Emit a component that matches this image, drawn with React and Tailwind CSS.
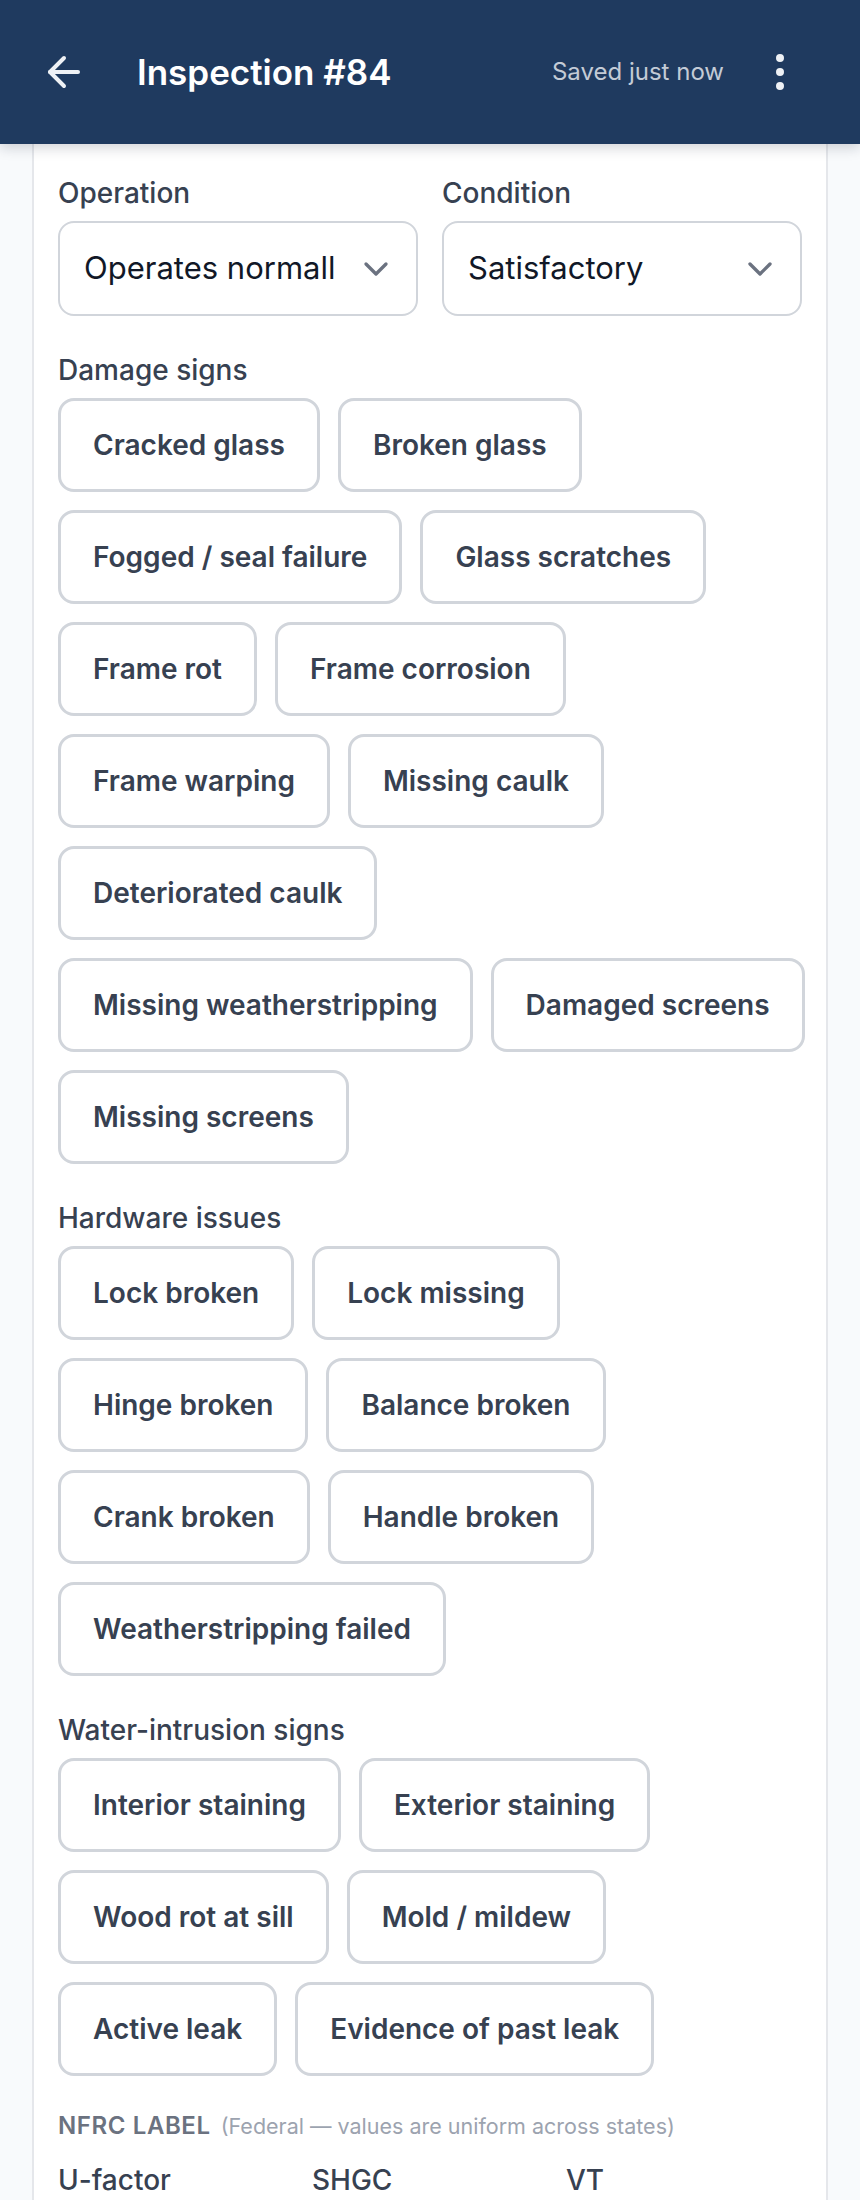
import { ArrowLeft, ChevronDown, EllipsisVertical } from 'lucide-react'

// rows are laid out the way the phone wraps them
const DAMAGE = [
  ['Cracked glass', 'Broken glass'],
  ['Fogged / seal failure', 'Glass scratches'],
  ['Frame rot', 'Frame corrosion'],
  ['Frame warping', 'Missing caulk'],
  ['Deteriorated caulk'],
  ['Missing weatherstripping', 'Damaged screens'],
  ['Missing screens'],
]

const HARDWARE = [
  ['Lock broken', 'Lock missing'],
  ['Hinge broken', 'Balance broken'],
  ['Crank broken', 'Handle broken'],
  ['Weatherstripping failed'],
]

const WATER = [
  ['Interior staining', 'Exterior staining'],
  ['Wood rot at sill', 'Mold / mildew'],
  ['Active leak', 'Evidence of past leak'],
]

function Label({ children }) {
  return (
    <div className="text-[28px] leading-[40px] font-medium text-[#374151] mb-[8px]">
      {children}
    </div>
  )
}

function Select({ label, value }) {
  return (
    <div>
      <Label>{label}</Label>
      <div className="h-[95px] flex items-center pl-[24px] pr-[20px] bg-white border-2 border-[#d1d5db] rounded-[16px]">
        <span className="flex-1 min-w-0 mr-[22px] overflow-hidden whitespace-nowrap text-[31px] text-[#111827]">
          {value}
        </span>
        <ChevronDown size={40} strokeWidth={2} className="shrink-0 text-[#6b7280]" />
      </div>
    </div>
  )
}

function ChipGroup({ label, rows }) {
  return (
    <div>
      <Label>{label}</Label>
      <div className="flex flex-col gap-[18px]">
        {rows.map((row, i) => (
          <div key={i} className="flex gap-[18px]">
            {row.map((item) => (
              <button
                key={item}
                className="h-[94px] px-[32px] bg-white border-[3px] border-[#d1d5db] rounded-[16px] text-[28px] font-semibold text-[#374151] whitespace-nowrap"
              >
                {item}
              </button>
            ))}
          </div>
        ))}
      </div>
    </div>
  )
}

export default function App() {
  return (
    <div className="h-[2200px] overflow-hidden bg-[#f8fafc]" style={{ fontFamily: 'Inter, "Noto Sans", sans-serif' }}>
      {/* Top bar */}
      <header className="relative z-10 h-[144px] flex items-center pl-[40px] pr-[56px] bg-[#1f3a5f] shadow-[0_4px_12px_rgba(15,23,42,0.18)]">
        <ArrowLeft size={48} strokeWidth={2} className="text-[#eef1f5] shrink-0" />
        <h1 className="ml-[49px] flex-1 text-[35px] font-semibold text-white">Inspection #84</h1>
        <span className="text-[24px] text-[#c3cbd6]">Saved just now</span>
        <EllipsisVertical size={48} strokeWidth={2} className="ml-[32px] text-[#eef1f5] shrink-0" />
      </header>

      {/* Window card (scrolled) */}
      <div className="mx-[32px] bg-white border-x-2 border-[#e5e7eb] px-[24px] pt-[29px] pb-[40px]">
        <div className="flex flex-col gap-[34px]">
          <div className="grid grid-cols-2 gap-[24px]">
            <Select label="Operation" value="Operates normally" />
            <Select label="Condition" value="Satisfactory" />
          </div>

          <ChipGroup label="Damage signs" rows={DAMAGE} />
          <ChipGroup label="Hardware issues" rows={HARDWARE} />
          <ChipGroup label="Water-intrusion signs" rows={WATER} />

          <div>
            <div className="mb-[16px] leading-[32px]">
              <span className="text-[24px] font-semibold uppercase tracking-[0.025em] text-[#6b7280]">NFRC label</span>
              <span className="ml-[10px] text-[21.5px] text-[#9ca3af]">(Federal — values are uniform across states)</span>
            </div>
            <div className="grid grid-cols-3 gap-[18px]">
              {['U-factor', 'SHGC', 'VT'].map((f) => (
                <div key={f}>
                  <Label>{f}</Label>
                  <div className="h-[95px] border-2 border-[#d1d5db] rounded-[16px] bg-white" />
                </div>
              ))}
            </div>
          </div>
        </div>
      </div>
    </div>
  )
}
